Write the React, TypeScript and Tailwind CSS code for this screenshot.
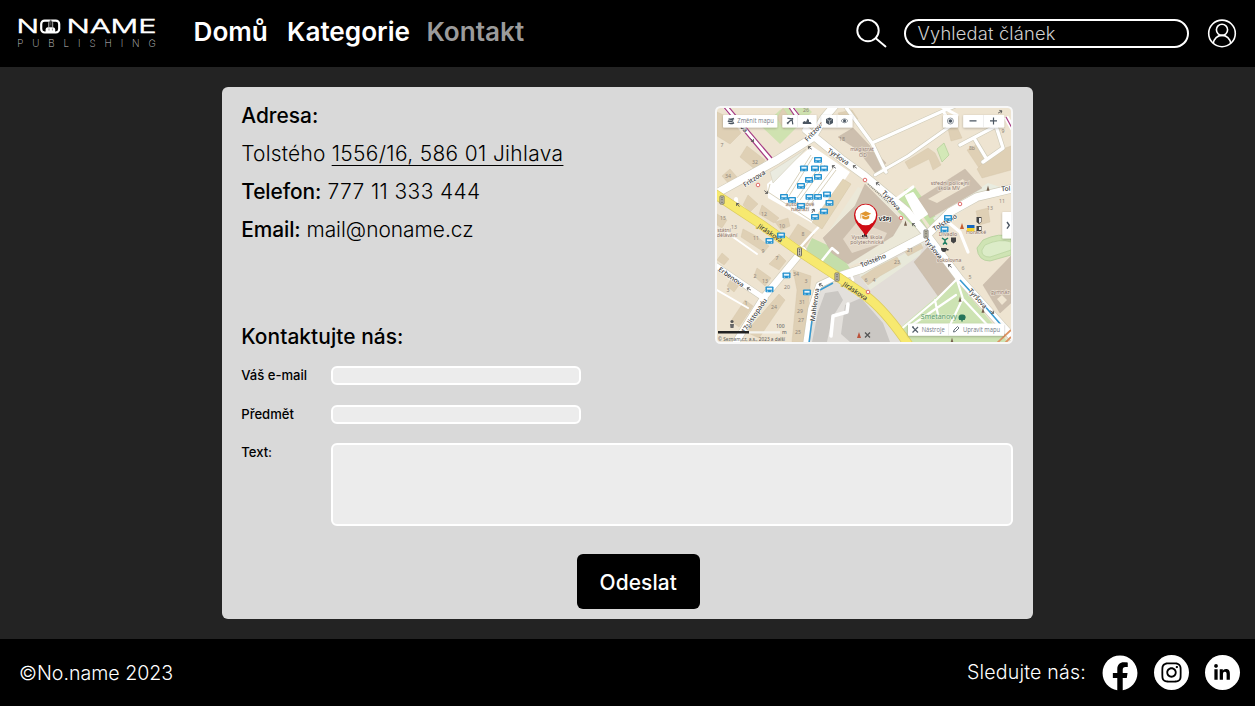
import { FaFacebook, FaInstagram, FaLinkedinIn } from "react-icons/fa";

const INTER = "font-['Inter',sans-serif]";

function Logo() {
  return (
    <svg width="144" height="38" viewBox="15 14 144 38" role="img" aria-label="No Name Publishing">
      <g fontFamily="Inter, sans-serif" fill="#fff">
        <g stroke="#fff" strokeWidth=".5">
          <text x="16.600" y="33.400" fontSize="18.800" fontWeight="300" textLength="22.500" lengthAdjust="spacingAndGlyphs">N</text>
          <text x="66.600" y="33.400" fontSize="18.800" fontWeight="300" textLength="90" lengthAdjust="spacingAndGlyphs">NAME</text>
        </g>
        <text x="17.300" y="47" fontSize="9.800" fontWeight="200" fill="#c8c8c8" textLength="138.500" lengthAdjust="spacing">PUBLISHING</text>
      </g>
      <rect x="41.200" y="20.600" width="18" height="11.900" rx="3.400" fill="none" stroke="#fff" strokeWidth="2.200" />
      <path d="M45.600 32.500v-3q0-2 2-2.300h5.600q2 .3 2 2.300v3z" fill="#fff" />
      <path d="M48.700 27v-4.300q0-2.200 2-2.200t2 2.200V27" fill="#222" stroke="#ccc" strokeWidth=".8" />
      <path d="M50.700 19.500v5.500M49 28.500v2M52.400 28.500v2" stroke="#555" strokeWidth=".7" />
    </svg>
  );
}

type Pt = [number, number];

const stops: Pt[] = [
  [818, 160], [804, 168.5], [815, 168.5], [824, 168.5], [818, 177], [809, 180], [801, 186],
  [784, 197], [792, 200], [801, 206], [809.5, 197], [818, 197], [827, 194.5], [829.5, 203],
  [824, 211.5], [815, 217], [781, 235.5], [769.5, 241], [786.5, 275.5], [769.5, 289.5],
  [807, 292.5], [948, 218], [944.5, 229.5],
];

const buildings = [
  "717,112 730,118 741,133 730,144 717,136",
  "747,146 765,160 757,171 740,157",
  "722,176 730,169 737,177 729,184",
  "748,195 758,204 750,212 743,205",
  "762,205 779,218 774,223 759,214",
  "717,214 727,220 722,228 717,225",
  "743,229 756,236 769,246 764,252 741,237",
  "769,264 779,254 786,261 779,270",
  "757,268 771,278 765,286 754,276",
  "722,253 729,259 724,265 717,260",
  "731,279 739,285 734,292 727,286",
  "745,300 753,306 739,327 731,321",
  "779,294 785,300 759,338 746,332",
  "793,270 811,276 808,310 803,342 792,342 797,290",
  "798,224 814,234 804,248 789,238",
  "775,222 788,218 790,226 781,230",
  "783,108 791,120 784,129 777,118",
  "905,162 928,148 935,153 941,165 933,170 929,159 909,169",
  "967,150 976,145 986,163 979,168",
  "994,152 1011,146 1011,170 982,178 977,169",
  "976,211 988,208 990,222 979,225",
  "905,252 921,244 923,248 908,256",
  "861,277 875,268 897,257 901,264 880,276 868,285",
  "838,113 852,110 858,119 843,122",
  "944,112 954,120 962,138 951,141",
];

const largeBuildings = [
  "918,199 965,169 982,188 930,218",
  "865,184 902,221 893,236 848,264 832,253 823,238 855,206",
  "838,137 853,128 886,163 876,174 858,150",
  "914,262 928,247 957,278 938,296",
  "983,285 1011,256 1011,303 1000,313",
];

const numbers: [string, number, number][] = [
  ["7", 722, 145], ["32", 755, 162], ["34", 728, 176], ["15", 723, 218], ["12", 764, 214],
  ["13", 734, 227], ["10", 782, 226], ["11", 756, 238], ["9", 763, 251], ["8", 803, 234],
  ["7", 777, 258], ["2", 755, 276], ["13", 765, 281], ["34", 796, 274], ["20", 787, 287],
  ["3", 806, 281], ["24", 774, 307], ["31", 802, 302], ["29", 800, 311], ["27", 801, 320],
  ["25", 798, 332], ["3", 728, 290], ["1", 746, 303], ["18", 842, 139], ["8b", 972, 148],
  ["9", 1003, 131], ["11", 1002, 201], ["13", 990, 208], ["21", 910, 250], ["23", 897, 262],
  ["6", 866, 280], ["4", 874, 280], ["6", 963, 268], ["5", 970, 277], ["26", 806, 110],
];

const trafficMarks: Pt[] = [[722, 200], [799.5, 252], [837, 277], [926, 234]];
const redMarks: Pt[] = [[758, 185], [865, 180], [901, 218], [960, 204], [868, 292]];
const arrows: [number, number, number][] = [
  [752, 140, 45], [810, 148, 215], [834, 167, 215], [855, 167, 215], [766, 192, 40],
  [738, 205, 230], [813, 211, 300], [878, 184, 215], [749, 289, 210], [821, 285, 205],
  [914, 225, 220], [950, 266, 220], [992, 312, 35], [1000, 112, 330],
];
const trees: Pt[] = [[988, 189], [905.5, 224], [960, 300], [983, 311], [952, 341]];

function MapView() {
  return (
    <svg width="298" height="238" viewBox="715 106 298 238" className="block" role="img" aria-label="Mapa">
      <defs>
        <clipPath id="map-clip"><rect x="717" y="108" width="294" height="234" rx="3.5" /></clipPath>
        <filter id="panel-shadow" x="-20%" y="-40%" width="140%" height="200%">
          <feDropShadow dx="0" dy=".8" stdDeviation="1.2" floodOpacity=".28" />
        </filter>
      </defs>
      <rect x="715" y="106" width="298" height="238" rx="5.5" fill="#f8f8f8" />
      <g clipPath="url(#map-clip)">
        <rect x="715" y="106" width="298" height="238" fill="#eee4d1" />
        <path d="M838 280L927 237L960 280L904 328Q885 310 860 293Z" fill="#e2ddd7" />
        <path d="M818 288L840 282Q880 305 902 344H806Z" fill="#e3e0dc" />
        <path d="M900 328L956 280L1008 342H912Z" fill="#cde3b3" />
        <path d="M762 127L780 110L790 106H806L812 112L780 144Z" fill="#cfe2b0" />
        <path d="M858 187L823 240L840 270L905 245L924 235L890 200Z" fill="#ebe8d8" />
        <path d="M812 238L838 250L851 270L838 274L806 250Z" fill="#c4deaa" />
        <path d="M937 149L944 143L949 155L942 162Z" fill="#d3e8b7" stroke="#aac991" strokeWidth=".6" />
        <path d="M893 200L905 192L932 236L922 234L898 212Z" fill="#c5e2a8" />
        <path d="M904 190L914 186L938 220L930 226Z" fill="#c5e2a8" />
        <path d="M933 218L988 183L1000 187L962 211L938 225Z" fill="#e9ece0" />
        <path d="M857 272L900 256L924 242L920 255L870 290Z" fill="#e8e9da" />
        <path d="M977 248L983 240Q1000 232 1011 237V255L990 261Q978 261 977 248Z" fill="#cfe4b4" stroke="#b3cf99" strokeWidth=".8" />
        <path d="M982 250L985 245Q1000 238 1011 242V250L990 257Q981 257 982 250Z" fill="#dcecc8" stroke="#b3cf99" strokeWidth=".6" />

        <g fill="#dfd0b5" stroke="#d3c4aa" strokeWidth=".4">{buildings.map((p) => <polygon key={p} points={p} />)}</g>
        <g fill="#cdbfae" stroke="#c2b4a3" strokeWidth=".4">{largeBuildings.map((p) => <polygon key={p} points={p} />)}</g>
        <path d="M928 199L963 179L967 186L937 203Z" fill="#eee4d1" />
        <path d="M858 221L887 233L882 243L852 253L843 239Z" fill="#e4d9c9" />
        <path d="M825 293L838 291L843 300L837 310L832 318L827 342H812L818 312ZM845 305L861 298L883 323L890 342H850L841 334Z" fill="#cac7c3" />
        <path d="M997 299L1002 295L1007 300L1002 305Z" fill="#efe5d2" />

        <g fill="none" strokeLinecap="round" strokeLinejoin="round">
          <g stroke="#cfcbb9">
            <path d="M708 198L777 160L812 138L824 118L836 104" strokeWidth="9" />
            <path d="M806 130L843 160L865 176L907 211L927 235L960 279L1015 340" strokeWidth="8.5" />
            <path d="M837 277L862 269L927 235L950 212L977 197L1015 188" strokeWidth="9" />
            <path d="M712 263L765 299" strokeWidth="6.5" />
            <path d="M803 250L764 297L736 342" strokeWidth="8" />
            <path d="M836 277L819 285L811 309L806 344" strokeWidth="7" />
            <path d="M875 175L908 156L956 122" strokeWidth="4" />
            <path d="M845 106L872 143L882 164L886 172M872 143L943 111L960 104M960 145L996 126L1003 148L983 162M974 138L986 158" strokeWidth="4.6" />
          </g>
          <g stroke="#fff">
            <path d="M708 198L777 160L812 138L824 118L836 104" strokeWidth="7.8" />
            <path d="M806 130L843 160L865 176L907 211L927 235L960 279L1015 340" strokeWidth="7.3" />
            <path d="M837 277L862 269L927 235L950 212L977 197L1015 188" strokeWidth="7.8" />
            <path d="M712 263L765 299" strokeWidth="5.300" />
            <path d="M803 250L764 297L736 342" strokeWidth="6.700" />
            <path d="M836 277L819 285L811 309L806 344" strokeWidth="5.700" />
            <path d="M875 175L908 156L956 122" strokeWidth="2.800" />
            <path d="M845 106L872 143L882 164L886 172M872 143L943 111L960 104M960 145L996 126L1003 148L983 162M974 138L986 158" strokeWidth="3.400" />
            <path d="M943 111L952 125M940 106L957 115" strokeWidth="3" />
            <path d="M895 200L913 187M948 222L960 232L968 252" strokeWidth="3.200" />
            <path d="M906 196L913 193L927 214L918 220Z" fill="#fff" strokeWidth="2" />
            <path d="M956 280L936 300L900 330M935 300L938 315M957 280L963 299L992 330M956 295L912 325M962 300L950 325" strokeWidth="2.200" />
            <path d="M831 336L833 316L847 312L848 304" strokeWidth="3.500" />
            <path d="M796 252L812 234L828 217M838 253L832 248L820 263M850 273L853 280" strokeWidth="2.500" />
            <path d="M717 290L748 308M726 232L757 254" strokeWidth="2" />
            <path d="M736 199L737 210" strokeWidth="4" />
          </g>
        </g>
        <path d="M767 184L812 146L850 172L838 190L812 223L768 198Z" fill="#fff" />
        <path d="M770 172L806 149L773 183Z" fill="#eaebe0" stroke="#d7d3c2" strokeWidth=".7" />
        <g fill="none" stroke="#d9d2bd" strokeWidth="1">
          <path d="M786 194L811 155M789 196L813 157M797 198L822 163M800 200L825 165M807 203L833 168M810 205L836 170" />
          <path d="M770 184L768 192L812 221" />
        </g>
        <path d="M843 179L851 184L822 229L812 222Z" fill="#e2d4b6" stroke="#d3c4a5" strokeWidth=".5" />
        <path d="M709 190L762 225L800 252L838 277L866 296Q887 312 912 350" fill="none" stroke="#dccc60" strokeWidth="9.800" />
        <path d="M709 190L762 225L800 252L838 277L866 296Q887 312 912 350" fill="none" stroke="#f7e96f" strokeWidth="8.400" />
        <g fill="none">
          <path d="M724 105L771 160M790 105L797 116M1006 117L1013 129" stroke="#fff" strokeWidth="5" />
          <path d="M722 105L768 160M727 105L772 158M788 106L796 118M792 106L799 115M1006 117L1012 128" stroke="#a63b83" strokeWidth="1.200" />
          <path d="M833 283L820 290M812 320L809 343M960 280L971 292M983 304L1002 326" stroke="#3a9bd1" strokeWidth="1.600" />
          <path d="M868 184L889 203" stroke="#8b8b84" strokeWidth="1.500" strokeDasharray="1 1" />
          <path d="M996 344L1011 330M1004 344L1011 337" stroke="#dd9463" strokeWidth="1.800" />
        </g>

        <g fontFamily="'Noto Sans', sans-serif" fontSize="5.200" fill="#8d847a">
          {numbers.map(([n, x, y]) => <text key={`${x}-${y}`} x={x} y={y + 2} textAnchor="middle">{n}</text>)}
        </g>
        <g fontFamily="'Noto Sans', sans-serif" fontSize="6.600" fontWeight="500" fill="#3b3b3b" stroke="#fff" strokeWidth="1.200" paintOrder="stroke" strokeLinejoin="round" textAnchor="middle">
          <text transform="translate(755.500 180.500) rotate(-33)">Fritzova</text>
          <text transform="translate(816 133) rotate(-47)">Fritzova</text>
          <text transform="translate(837 158.500) rotate(34)">Tyršova</text>
          <text transform="translate(889.500 202) rotate(48)">Tyršova</text>
          <text transform="translate(931.500 250) rotate(50)">Tyršova</text>
          <text transform="translate(976 300) rotate(48)">Tyršova</text>
          <text transform="translate(769 235) rotate(34)" stroke="#f9e971">Jiráskova</text>
          <text transform="translate(854 293) rotate(34)" stroke="#f9e971">Jiráskova</text>
          <text transform="translate(730 279) rotate(35)">Erbenova</text>
          <text transform="translate(874 262.500) rotate(-22)">Tolstého</text>
          <text transform="translate(946 224.500) rotate(-30)">Tolstého</text>
          <text transform="translate(1006 191) rotate(-4)">Tol</text>
          <text transform="translate(756 317) rotate(-56)">17. listopadu</text>
          <text transform="translate(817 305) rotate(-82)">Mahlerova</text>
          <text transform="translate(741 129) rotate(48)">ova</text>
        </g>
        <g fontFamily="'Noto Sans', sans-serif" fontSize="5.200" fill="#8a7268" stroke="#f3ebdf" strokeWidth=".9" paintOrder="stroke" textAnchor="middle">
          <text x="800" y="205.500">autobusové</text><text x="800" y="211">nádraží</text>
          <text x="950" y="184.500">střední policejní</text><text x="949" y="190">škola MV</text>
          <text x="867" y="238.500">Vysoká škola</text><text x="867" y="244">polytechnická</text>
          <text x="862" y="151">magistrát</text><text x="863" y="157">OD</text>
          <text x="724" y="231.500">státní</text><text x="727" y="237">dělávání</text>
          <text x="948" y="235.500">Divadlo</text><text x="949" y="261.500">sokolovna</text>
          <text x="976" y="233.500">Horácké</text><text x="1000" y="293.500">gymnáz</text>
        </g>
        <g fontFamily="'Noto Sans', sans-serif" fontSize="7" fill="#5a9a6c" stroke="#e4f0d5" strokeWidth="1" paintOrder="stroke" textAnchor="middle">
          <text x="939" y="319">Smetanovy</text>
        </g>

        {stops.map(([x, y]) => (
          <g key={`${x}-${y}`} transform={`translate(${x} ${y})`}>
            <rect x="-4" y="-3" width="8" height="5.800" rx=".8" fill="#2492cf" />
            <rect x="-2.600" y="-1.700" width="5.200" height="1.900" fill="#e7f5fc" />
            <path d="M-2.600 1.700h1.200M1.400 1.700h1.200" stroke="#d9effa" strokeWidth=".8" />
          </g>
        ))}
        {trafficMarks.map(([x, y]) => (
          <g key={`${x}-${y}`}>
            <rect x={x - 2} y={y - 4} width="4" height="8" rx=".6" fill="#e5e0c8" stroke="#555" strokeWidth=".8" />
            <path d={`M${x} ${y - 2.8}v5.6`} stroke="#444" strokeWidth="1.500" strokeDasharray="1.3 .8" />
          </g>
        ))}
        {redMarks.map(([x, y]) => <circle key={`${x}-${y}`} cx={x} cy={y} r="1.800" fill="#fff" stroke="#e06a6a" strokeWidth="1" />)}
        {arrows.map(([x, y, r]) => <path key={`${x}-${y}`} transform={`translate(${x} ${y}) rotate(${r})`} d="M-2.200 0h4.400M.2-1.700l2 1.700-2 1.700" fill="none" stroke="#555" strokeWidth=".8" />)}
        {trees.map(([x, y]) => <path key={`${x}-${y}`} d={`M${x} ${y - 3.5}l1.500 5.300h-3z`} fill="#75604e" />)}
        <path d="M958.500 318q0-4 3.500-3.500 3.500-.5 3.700 3l-1 2.500h-5.500z" fill="#26745a" /><path d="M962 317v4.500" stroke="#26745a" strokeWidth="1.400" />
        <path d="M967 225h7.500v3h-7.500z" fill="#1566bd" /><path d="M967 228h7.500v3.200h-7.500z" fill="#f5d330" />
        <path d="M962 223l2 6h-4z" fill="#c55d31" />
        <path d="M976.500 217h5v5l-2.500 2-2.500-2zM976.500 226h5v5h-5zM951 237.500h5v4l-2.500 2-2.500-2z" fill="#444" />
        <path d="M979 218h2v4l-2 1zM979 227h2v3h-2z" fill="#eee" />
        <path d="M942 238l3 2 3-2M945 240v2l-2 2.500M945 242l2 2.500" fill="none" stroke="#238165" strokeWidth="1.500" />
        <path d="M941 248h6q0 4-3 4t-3-4M947 249h1.500v1.500H947" fill="#444" />
        <path d="M865 332.500l5 5M870 332.500l-5 5" stroke="#555" strokeWidth="1.300" /><path d="M859 332l2 6h-4z" fill="#bb5139" />
        <circle cx="732" cy="321.500" r="1.600" fill="#555" /><path d="M730 324h4l-.5 4h-3z" fill="#666" />

        <path d="M865.700 237C863.500 230 854.500 225 854 215.500A11.700 11.700 0 0 1 877.400 215.500C877 225 868 230 865.700 237Z" fill="#cf0d15" />
        <circle cx="865.700" cy="214.800" r="10.400" fill="#fff" />
        <path d="M865.700 211.200l5.500 2.500-5.500 2.500-5.500-2.500z" fill="#e19630" />
        <path d="M862.200 215.500v2.800q3.500 2.500 7 0v-2.800l-3.500 1.600z" fill="#e19630" /><path d="M860.800 214v4.500" stroke="#e19630" strokeWidth=".8" />
        <text x="878.600" y="220.600" fontFamily="'Noto Sans', sans-serif" fontSize="6" fontWeight="700" fill="#222" stroke="#fff" strokeWidth="1.200" paintOrder="stroke">VŠPJ</text>
        <path d="M862 236h5M862.500 235v2M866.500 235v2M864.500 234v2" stroke="#333" strokeWidth="1" />

        <g fill="#fff" filter="url(#panel-shadow)">
          <rect x="723" y="115" width="54.300" height="12.500" rx=".8" />
          <rect x="782.300" y="115" width="34.300" height="12.500" rx=".8" />
          <rect x="821.500" y="115" width="31" height="12.500" rx=".8" />
          <rect x="943" y="115" width="15" height="12.500" rx=".8" />
          <rect x="963.200" y="115" width="41" height="12.500" rx=".8" />
          <rect x="908" y="323.500" width="96" height="12.200" rx=".8" />
          <rect x="1002.300" y="212" width="11" height="26.500" rx=".8" />
        </g>
        <g stroke="#e8e8e8" strokeWidth=".7"><path d="M797.500 115v12.500M837 115v12.500M983.500 115v12.500M948.500 323.500v12.200" /></g>
        <path d="M728.500 118.900q2.700.9 5.500-.4M727.800 121q2.700.9 5.500-.4M728.500 123.100q2.700.9 5.500-.4" fill="none" stroke="#4b5662" strokeWidth="1.500" />
        <path d="M787.300 118.200l5.900 1M792.800 118.200l-5.500 5.300M792 119l.8 5.300M787 122.500l1.400 1.500" stroke="#4b5662" strokeWidth="1.200" fill="none" />
        <g fill="#4b5662">
          <path d="M802.800 124v-2l2-1 1.200 1 1.500-3.500 1.500 1.500v2h1.500l1.200 2z" />
          <path d="M829.500 117.500l3.500 1.500v4l-3.500 2-3.500-2v-4z" />
        </g>
        <path d="M827 119.500l2.500 1.200 2.500-1.200M829.500 121v3.500" stroke="#fff" strokeWidth=".5" fill="none" />
        <path d="M841 120.800q3.500-4 7 0q-3.500 4-7 0" fill="none" stroke="#7a838c" strokeWidth=".8" /><circle cx="844.500" cy="120.800" r="1.500" fill="#4b5662" />
        <circle cx="950.400" cy="121" r="3" fill="none" stroke="#7a838c" strokeWidth=".8" /><circle cx="950.400" cy="121" r="1.800" fill="#4b5662" />
        <path d="M969.500 120.900h7M990 120.900h7M993.500 117.400v7" stroke="#4b5662" strokeWidth="1.200" />
        <path d="M1007 222l2.300 3.300-2.300 3.300" fill="none" stroke="#4b5662" strokeWidth="1.400" />
        <path d="M912.500 327l5.500 5.500M918 327l-5.500 5.500M912 326.800l2 .2" stroke="#56616c" strokeWidth="1.200" />
        <path d="M953.500 332l.5-2 3.500-3.500 1.500 1.500-3.500 3.500z" fill="none" stroke="#56616c" strokeWidth=".9" />
        <g fontFamily="'Open Sans', sans-serif" fontSize="6.300" fill="#737c86">
          <text x="737.300" y="123.400" textLength="36.500" lengthAdjust="spacingAndGlyphs">Změnit mapu</text>
          <text x="921.700" y="331.900" textLength="23" lengthAdjust="spacingAndGlyphs">Nástroje</text>
          <text x="963" y="331.900" textLength="37" lengthAdjust="spacingAndGlyphs">Upravit mapu</text>
        </g>
        <path d="M718 332.300h31" stroke="#222" strokeWidth="2.600" /><path d="M749 332.300h31" stroke="#f4f4ef" strokeWidth="2.200" />
        <g fontFamily="'Noto Sans', sans-serif" fontSize="5" fill="#555">
          <text x="746" y="328">50</text><text x="776" y="328">100</text><text x="782" y="334.200">m</text>
          <text x="718" y="341.200" textLength="67" lengthAdjust="spacingAndGlyphs">© Seznam.cz, a.s., 2023 a další</text>
        </g>
      </g>
    </svg>
  );
}

function Header() {
  return (
    <header className="flex h-[67px] shrink-0 items-start bg-black text-white">
      <div className="mt-[14px] ml-[15px] w-[144px]"><Logo /></div>
      <nav className="mt-[15px] ml-[34.500px] flex text-[26.150px] leading-[33px] font-semibold">
        <a className="w-[93.500px]">Domů</a>
        <a className="w-[139.500px]">Kategorie</a>
        <a className="text-[#9b9b9b]">Kontakt</a>
      </nav>
      <div className="mr-[18px] ml-auto flex items-start">
        <svg className="mt-[18px]" width="32" height="31" viewBox="855 18 32 31" fill="none" stroke="#fff" strokeWidth="1.900" strokeLinecap="round" aria-hidden="true">
          <circle cx="868" cy="30.600" r="10.700" /><path d="M875.700 38.200l9.800 8.200" />
        </svg>
        <div className="mt-[19px] ml-[17px] flex h-[28.500px] w-[285px] items-center rounded-full border-2 border-white pl-[11.500px] text-[18.300px] font-light tracking-[0.180px] text-[#d0d0d0]">Vyhledat článek</div>
        <svg className="mt-[19px] ml-[18px]" width="30" height="30" viewBox="1207 19 30 30" fill="none" stroke="#fff" strokeWidth="1.600" aria-hidden="true">
          <circle cx="1222" cy="33.400" r="13.300" /><circle cx="1222" cy="29.800" r="5.600" />
          <path d="M1213.300 43.500c.5-5 4.200-8.100 8.700-8.100s8.200 3.100 8.700 8.100" />
        </svg>
      </div>
    </header>
  );
}

function ContactForm() {
  const field = "border-2 border-white bg-[#ececec] rounded-[6px]";
  return (
    <form className="flex flex-col text-[13.070px] leading-[18px] font-medium">
      <div className="flex h-[39px] items-start"><label className="w-[89.500px]">Váš e-mail</label><div className={`h-[19px] w-[250.500px] ${field}`} /></div>
      <div className="flex h-[38px] items-start"><label className="w-[89.500px]">Předmět</label><div className={`-mt-[0.500px] h-[19px] w-[250.500px] ${field}`} /></div>
      <div className="flex items-start"><label className="w-[89.500px]">Text:</label><div className={`-mt-[0.500px] h-[83.500px] w-[683px] ${field}`} /></div>
      <button type="button" className="mt-[28px] ml-[335.500px] h-[55px] w-[123px] rounded-[6px] bg-black pt-[2px] text-[20.900px] font-medium tracking-[0.100px] text-white">Odeslat</button>
    </form>
  );
}

export default function App() {
  return (
    <div className={`flex h-[706px] w-[1255px] flex-col overflow-hidden bg-[#232323] text-black ${INTER}`}>
      <Header />
      <main className="mx-auto mt-[20px] h-[532px] w-[811.500px] rounded-[6px] bg-[#d9d9d9] pr-[20px] pl-[19.500px]">
        <div className="flex h-[279px] justify-between pt-[19px]">
          <section className="flex flex-col text-[20.900px] leading-[38px] font-light">
            <div className="-mt-[9px] font-medium">Adresa:</div>
            <div className="tracking-[0.220px]">Tolstého <span className="tracking-[0.370px] underline decoration-1 underline-offset-[4px]">1556/16, 586 01 Jihlava</span></div>
            <div><span className="font-medium tracking-[-0.100px]">Telefon:</span><span className="tracking-[0.420px]"> 777 11 333 444</span></div>
            <div><span className="font-medium tracking-[-0.100px]">Email:</span> mail@noname.cz</div>
            <h2 className="mt-[69px] font-medium tracking-[0.060px]">Kontaktujte nás:</h2>
          </section>
          <MapView />
        </div>
        <ContactForm />
      </main>
      <footer className="mt-auto flex h-[67px] items-center justify-between bg-black pr-[15.500px] pl-[19px] text-[19.600px] font-light text-white">
        <span className="pt-[2px]">©No.name 2023</span>
        <div className="flex items-center">
          <span className="pt-[1px] tracking-[0.180px]">Sledujte nás:</span>
          <FaFacebook size={36} className="ml-[16px]" />
          <span className="ml-[15.500px] flex size-[35px] items-center justify-center rounded-full bg-white text-black"><FaInstagram size={23} /></span>
          <span className="ml-[16px] flex size-[35px] items-center justify-center rounded-full bg-white text-black"><FaLinkedinIn size={18} /></span>
        </div>
      </footer>
    </div>
  );
}
